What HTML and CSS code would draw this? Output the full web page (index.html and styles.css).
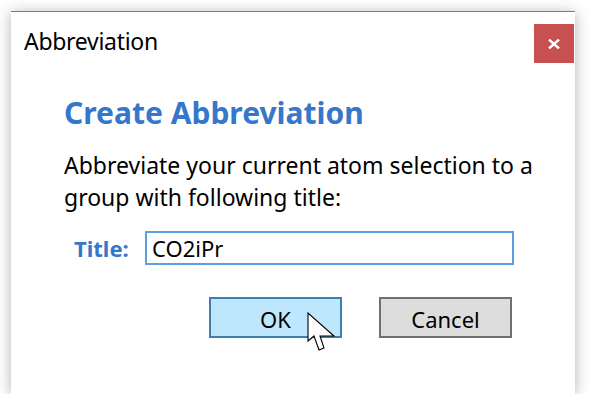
FILE: index.html
```html
<!DOCTYPE html>
<html>
<head>
<meta charset="utf-8">
<link rel="stylesheet" href="styles.css">
</head>
<body>
<div class="window">
  <div class="titlebar">
    <span class="wtitle">Abbreviation</span>
    <div class="close"><svg width="12" height="10" viewBox="0 0 12 10"><path d="M1 0.5 L11 9.5 M11 0.5 L1 9.5" stroke="#fff" stroke-width="2.4" fill="none"/></svg></div>
  </div>
  <div class="content">
    <h1 class="heading">Create Abbreviation</h1>
    <p class="desc">Abbreviate your current atom selection to a group with following title:</p>
    <div class="field">
      <label class="label">Title:</label>
      <div class="input">CO2iPr</div>
    </div>
    <div class="buttons">
      <div class="btn ok">OK
        <svg class="cursor" width="30" height="40" viewBox="0 0 30 40"><path d="M1 1 L1 29 L7 24 L12 38 L17 36 L13 24 L27 24 Z" fill="#fff" stroke="#000" stroke-width="1.1" stroke-linejoin="miter"/></svg>
      </div>
      <div class="btn cancel">Cancel</div>
    </div>
  </div>
</div>
</body>
</html>
```

FILE: styles.css
```css
html, body {
  margin: 0;
  padding: 0;
  background: #ffffff;
}
body {
  padding: 11px 0 0 11px;
  font-family: "Noto Sans", "Open Sans", sans-serif;
  color: #000;
}
.window {
  width: 564px;
  height: 383px;
  box-sizing: border-box;
  background: #fff;
  border-top: 1px solid #2b8ede;
  box-shadow: 0 2px 14px rgba(0,0,0,0.3);
  display: flex;
  flex-direction: column;
}
.titlebar {
  display: flex;
  justify-content: space-between;
  align-items: flex-start;
  padding: 12px 1px 0 13px;
}
.wtitle {
  font-size: 23px;
  line-height: 34px;
  letter-spacing: -0.3px;
}
.close {
  width: 40px;
  height: 39px;
  background: #c75050;
  display: flex;
  align-items: center;
  justify-content: center;
}
.content {
  padding: 0 0 0 53px;
  display: flex;
  flex-direction: column;
}
.heading {
  margin: 0;
  margin-top: 32px;
  font-size: 30px;
  font-weight: 700;
  color: #3677cc;
  line-height: 36px;
  letter-spacing: 0;
}
.desc {
  margin: 18px 0 0 0;
  width: 480px;
  font-size: 23px;
  line-height: 32px;
}
.field {
  display: flex;
  align-items: center;
  margin-top: 18px;
  padding-left: 10px;
}
.label {
  font-size: 22px;
  font-weight: 700;
  color: #3677cc;
  width: 71px;
}
.input {
  width: 369px;
  height: 34px;
  box-sizing: border-box;
  border: 2px solid #5a9ee3;
  font-size: 22px;
  line-height: 30px;
  padding-left: 5px;
}
.buttons {
  display: flex;
  margin-top: 32px;
  padding-left: 145px;
  gap: 37px;
}
.btn {
  position: relative;
  width: 133px;
  height: 41px;
  box-sizing: border-box;
  border: 2px solid #707070;
  background: #dddddd;
  font-size: 22px;
  padding-top: 3px;
  display: flex;
  align-items: center;
  justify-content: center;
}
.ok {
  background: #bee6fd;
  border-color: #3c7fb1;
}
.cursor {
  position: absolute;
  left: 96px;
  top: 13px;
}
```
